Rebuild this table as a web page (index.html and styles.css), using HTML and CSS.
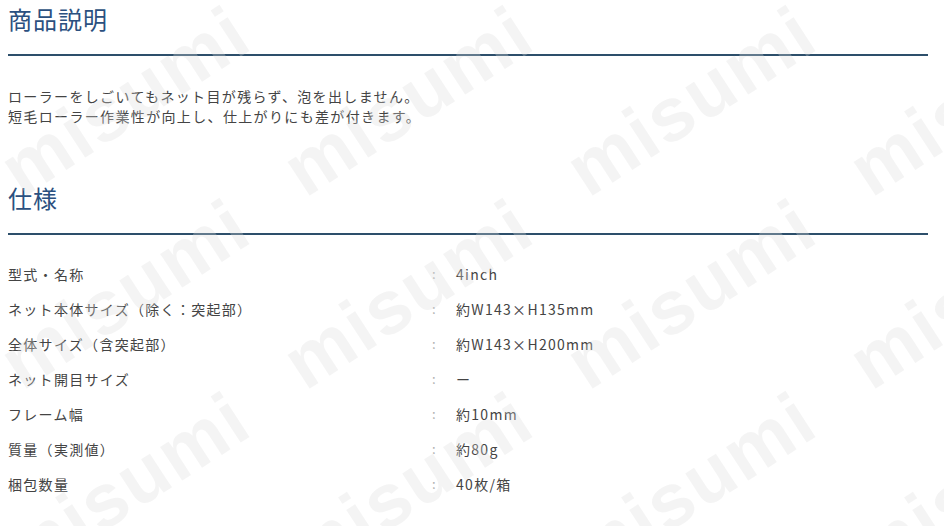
FILE: index.html
```html
<!DOCTYPE html>
<html lang="ja">
<head>
    <meta charset="UTF-8">
    <meta name="viewport" content="width=device-width, initial-scale=1.0">
    <title>商品説明・仕様</title>
    <link rel="stylesheet" href="styles.css">
</head>
<body>
    <div class="page">
        <div class="section">
            <h2 class="section-title">商品説明</h2>
            <p class="description">ローラーをしごいてもネット目が残らず、泡を出しません。<br>短毛ローラー作業性が向上し、仕上がりにも差が付きます。</p>
        </div>

        <div class="section spec">
            <h2 class="section-title">仕様</h2>
            <div class="spec-table">
                <div class="spec-row">
                    <span class="spec-label">型式・名称</span>
                    <span class="spec-colon">:</span>
                    <span class="spec-value">4inch</span>
                </div>
                <div class="spec-row">
                    <span class="spec-label">ネット本体サイズ（除く：突起部）</span>
                    <span class="spec-colon">:</span>
                    <span class="spec-value">約W143×H135mm</span>
                </div>
                <div class="spec-row">
                    <span class="spec-label">全体サイズ（含突起部）</span>
                    <span class="spec-colon">:</span>
                    <span class="spec-value">約W143×H200mm</span>
                </div>
                <div class="spec-row">
                    <span class="spec-label">ネット開目サイズ</span>
                    <span class="spec-colon">:</span>
                    <span class="spec-value">ー</span>
                </div>
                <div class="spec-row">
                    <span class="spec-label">フレーム幅</span>
                    <span class="spec-colon">:</span>
                    <span class="spec-value">約10mm</span>
                </div>
                <div class="spec-row">
                    <span class="spec-label">質量（実測値）</span>
                    <span class="spec-colon">:</span>
                    <span class="spec-value">約80g</span>
                </div>
                <div class="spec-row">
                    <span class="spec-label">梱包数量</span>
                    <span class="spec-colon">:</span>
                    <span class="spec-value">40枚/箱</span>
                </div>
            </div>
        </div>
    </div>

    <!-- Wasserzeichen über dem Inhalt -->
    <div class="watermark" aria-hidden="true">
        <div class="watermark-grid">
            <span>misumi</span><span>misumi</span><span>misumi</span><span>misumi</span>
            <span>misumi</span><span>misumi</span><span>misumi</span><span>misumi</span>
            <span>misumi</span><span>misumi</span><span>misumi</span><span>misumi</span>
        </div>
    </div>
</body>
</html>
```

FILE: styles.css
```css
body {
    font-family: "Noto Sans CJK JP", "Noto Sans", sans-serif;
    margin: 0;
    background-color: #fff;
    color: #444;
    overflow: hidden;
}
.page {
    width: 920px;
    padding-left: 8px;
}
.section-title {
    margin: 0;
    font-size: 24px;
    font-weight: 400;
    line-height: 38px;
    letter-spacing: 1px;
    color: #2b5080;
    padding-bottom: 16px;
    border-bottom: 2px solid #2d4f6b;
}
.description {
    margin: 30px 0 0;
    font-size: 14px;
    line-height: 20px;
    letter-spacing: 1.35px;
}
.spec {
    margin-top: 53px;
}
.spec-table {
    padding-top: 21px;
}
.spec-row {
    display: grid;
    grid-template-columns: 424px 24px 1fr;
    height: 35px;
    align-items: center;
    font-size: 14px;
    letter-spacing: 1.3px;
}
.spec-colon {
    color: #b0b0b0;
    font-size: 13px;
}
.watermark {
    position: fixed;
    inset: 0;
    overflow: hidden;
    pointer-events: none;
}
.watermark-grid {
    display: grid;
    grid-template-columns: repeat(4, 283px);
    grid-auto-rows: 193px;
    margin: 4px 0 0 -17px;
}
.watermark span {
    display: flex;
    align-items: center;
    justify-content: center;
    font-family: "Liberation Sans", sans-serif;
    font-weight: 700;
    font-size: 76px;
    letter-spacing: 2px;
    color: rgba(220, 220, 220, 0.3);
    transform: rotate(-33deg);
}
```
